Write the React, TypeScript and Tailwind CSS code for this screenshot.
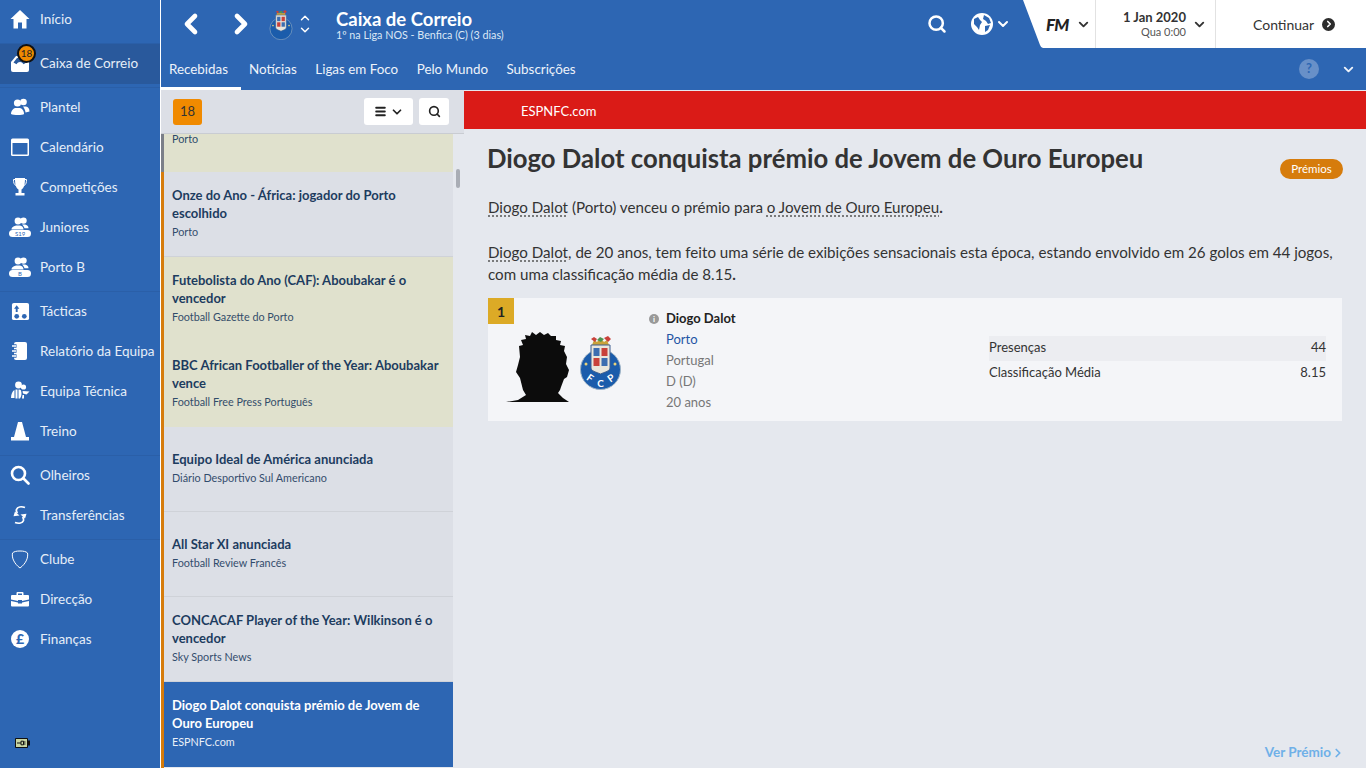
import { ChevronDown, ChevronLeft, ChevronRight, ChevronUp, Search, Menu } from "lucide-react";
import type { ReactNode } from "react";

// Club crest, used small in the header and larger in the award card
function Crest({ className, letters }: { className: string; letters?: boolean }) {
  return (
    <svg viewBox="0 0 41 56" className={className} aria-hidden="true">
      <circle cx="20.500" cy="35.500" r="20" fill="#1b5cab" stroke="#9fb4c6" strokeWidth="1" />
      <path d="M12 11l2-5 3 2 3.500-4 3.500 4 3-2 2 5z" fill="#c9a23a" />
      <path d="M11 5l3-2 3 2-2 3zM24 4l4-2 3 3-3 3z" fill="#c8413a" />
      <path d="M17 6l3-3 4 2-3 3z" fill="#4f9350" />
      <path d="M11 11h19v23c0 3-5 4-9.500 6C16 38 11 37 11 34z" fill="#e9e6dc" stroke="#3e5f8f" strokeWidth="1" />
      <rect x="13.500" y="14" width="6" height="8" fill="#3c6db0" />
      <rect x="21.500" y="14" width="6" height="8" fill="#c8413a" />
      <rect x="13.500" y="24" width="6" height="8" fill="#c8413a" />
      <rect x="21.500" y="24" width="6" height="8" fill="#3c6db0" />
      <circle cx="6" cy="30" r="1.500" fill="#e8d27a" />
      <circle cx="35" cy="30" r="1.500" fill="#e8d27a" />
      {letters && (
        <g fill="white" fontSize="10" fontWeight="700" fontFamily="Lato, sans-serif" textAnchor="middle">
          <text x="8" y="47" transform="rotate(35 8 47)">F</text>
          <text x="20.500" y="53">C</text>
          <text x="33" y="47" transform="rotate(-35 33 47)">P</text>
        </g>
      )}
    </svg>
  );
}

function People({ pill }: { pill?: string }) {
  return (
    <svg viewBox="0 0 22 20" className="h-[20px] w-[22px]" fill="white" aria-hidden="true">
      <circle cx="9" cy="4" r="3.400" />
      <circle cx="14.500" cy="3.600" r="3.200" />
      <path d="M2.500 12.500c0-2.600 3-3.600 4.500-4h4c2 .5 3.500 1.600 3.500 4z" />
      <path d="M13 7.500h3c2 .4 3.500 1.500 3.500 3.800h-4c-.4-1.600-1.300-2.800-2.500-3.800z" />
      <rect x="0" y="13" width="22" height="7" rx="3.500" />
      {pill && (
        <text x="11" y="18.800" textAnchor="middle" fontSize="6" fill="#2d66b3" fontFamily="Lato, sans-serif">
          {pill}
        </text>
      )}
    </svg>
  );
}

const icons: Record<string, ReactNode> = {
  home: (
    <svg viewBox="0 0 20 20" className="h-5 w-5" fill="white">
      <path d="M10 1L0.500 10h3v9.500h4.500v-6h4v6h4.500V10h3z" />
    </svg>
  ),
  inbox: (
    <svg viewBox="0 0 20 20" className="h-5 w-5" fill="white">
      <path d="M1 9l5-6h8l5 6v8a2 2 0 0 1-2 2H3a2 2 0 0 1-2-2z" />
      <path d="M3.500 9.500L7 5h6l3.500 4.500-3 1.800C12.500 9.800 11.500 9 10 9s-2.500.8-3.500 2.300z" fill="#29599c" />
    </svg>
  ),
  squad: (
    <svg viewBox="0 0 20 18" className="h-[18px] w-5" fill="white">
      <circle cx="7.500" cy="5" r="3.600" />
      <circle cx="13.500" cy="4" r="3.300" />
      <path d="M1 16c0-4 3-5.500 4-6h5c1.500.5 4 2 4 6-1 1.300-11 1.300-13 0z" />
      <path d="M13 8.500h3c2 .5 3.500 2 3.500 5l-4 1c-.2-2.500-1.300-4.500-2.500-6z" />
    </svg>
  ),
  calendar: (
    <svg viewBox="0 0 20 20" className="h-5 w-5">
      <rect x="1" y="1.500" width="18" height="17.500" rx="1.500" fill="white" />
      <rect x="2.500" y="6" width="15" height="11.500" fill="#2d66b3" />
    </svg>
  ),
  trophy: (
    <svg viewBox="0 0 20 20" className="h-5 w-5" fill="white">
      <path d="M5 1h10c0 5.500-.5 9.500-3.500 11.500v3.500h3v2.500h-9V16h3v-3.500C5.500 10.500 5 6.500 5 1z" />
      <path d="M5 2.500H3.500c0 3 .4 5 2.500 6M15 2.500h1.500c0 3-.4 5-2.500 6" fill="none" stroke="white" />
    </svg>
  ),
  juniors: <People pill="S19" />,
  b: <People pill="B" />,
  tactics: (
    <svg viewBox="0 0 20 20" className="h-[19px] w-[19px]">
      <rect x="1" y="1" width="18" height="18" rx="2" fill="white" />
      <path d="M6 3.500l2.800 3.500H7v3.500H5V7H3.200z" fill="#2d66b3" />
      <circle cx="6" cy="15" r="2.500" fill="#2d66b3" />
      <circle cx="14" cy="15" r="2.500" fill="#2d66b3" />
    </svg>
  ),
  report: (
    <svg viewBox="0 0 20 20" className="h-5 w-5" fill="white">
      <rect x="4" y="1" width="13" height="18" rx="2" />
      <path d="M1.500 5h5M1.500 10h5M1.500 15h5" stroke="#2d66b3" strokeWidth="3.400" />
      <path d="M2 5h4M2 10h4M2 15h4" stroke="white" strokeWidth="1.500" />
    </svg>
  ),
  staff: (
    <svg viewBox="0 0 20 20" className="h-5 w-5" fill="white">
      <circle cx="8.500" cy="4" r="3.400" />
      <circle cx="13.500" cy="6" r="2.600" />
      <path d="M1 17c0-4 1.500-7 3.500-8v8zM5.500 8.500v9h2v-9zM8.500 8.500v9h1.500c1.500-2 2-5 1-8-.5-.6-1.500-1-2.500-1z" />
      <path d="M12.500 10l7 .5-3 3-3.500-1z" />
      <path d="M12 17.500h2V14h-1.500z" />
    </svg>
  ),
  cone: (
    <svg viewBox="0 0 20 20" className="h-5 w-5" fill="white">
      <path d="M8 1h4l4 15h3v3.500H1V16h3z" />
    </svg>
  ),
  scout: (
    <svg viewBox="0 0 20 20" className="h-5 w-5" fill="none" stroke="white" strokeWidth="2.600">
      <circle cx="8.500" cy="8.500" r="6.500" />
      <path d="M13.500 13.500l5 5" strokeLinecap="round" />
    </svg>
  ),
  transfers: (
    <svg viewBox="0 0 20 20" className="h-5 w-5" fill="none" stroke="white" strokeWidth="1.800">
      <path d="M15 2.500C11 1 7.500 2 6.500 4.500c-.5 1.500 0 2.500 1 3.500" />
      <path d="M5 6.500L9.500 10.500l-6 .8z" fill="white" stroke="none" />
      <path d="M5 17.500c4 1.500 7.500.5 8.500-2 .5-1.500 0-2.500-1-3.500" />
      <path d="M15 13.500L10.500 9.500l6-.8z" fill="white" stroke="none" />
    </svg>
  ),
  shield: (
    <svg viewBox="0 0 20 20" className="h-5 w-5" fill="none" stroke="white" strokeWidth="1">
      <path d="M10 2c3.500 0 6 .5 7.500 2 1 5-2 11-7.500 15C4.500 15 1.500 9 2.500 4 4 2.500 6.500 2 10 2z" />
    </svg>
  ),
  case: (
    <svg viewBox="0 0 20 20" className="h-5 w-5" fill="white">
      <path d="M6.500 6V4a1 1 0 0 1 1-1h5a1 1 0 0 1 1 1v2h-1.500V4.500h-4V6z" />
      <path d="M2 6h16a1 1 0 0 1 1 1v3.500l-7 1.500v-1H8v1l-7-1.500V7a1 1 0 0 1 1-1z" />
      <path d="M1 12l7 1.500v1h4v-1l7-1.500v4.500a1 1 0 0 1-1 1H2a1 1 0 0 1-1-1z" />
    </svg>
  ),
  money: (
    <div className="flex h-[18px] w-[18px] items-center justify-center rounded-full bg-white text-[14px] font-black leading-none text-[#2d66b3]">
      £
    </div>
  ),
};

const navGroups = [
  [{ label: "Início", icon: "home" }],
  [{ label: "Caixa de Correio", icon: "inbox", active: true, badge: "18" }],
  [
    { label: "Plantel", icon: "squad" },
    { label: "Calendário", icon: "calendar" },
    { label: "Competições", icon: "trophy" },
    { label: "Juniores", icon: "juniors" },
    { label: "Porto B", icon: "b" },
  ],
  [
    { label: "Tácticas", icon: "tactics" },
    { label: "Relatório da Equipa", icon: "report" },
    { label: "Equipa Técnica", icon: "staff" },
    { label: "Treino", icon: "cone" },
  ],
  [
    { label: "Olheiros", icon: "scout" },
    { label: "Transferências", icon: "transfers" },
  ],
  [
    { label: "Clube", icon: "shield" },
    { label: "Direcção", icon: "case" },
    { label: "Finanças", icon: "money" },
  ],
];

const messages = [
  { title: "Onze do Ano - África: jogador do Porto escolhido", source: "Porto" },
  { title: "Futebolista do Ano (CAF): Aboubakar é o vencedor", source: "Football Gazette do Porto", unread: true },
  { title: "BBC African Footballer of the Year: Aboubakar vence", source: "Football Free Press Português", unread: true },
  { title: "Equipo Ideal de América anunciada", source: "Diário Desportivo Sul Americano" },
  { title: "All Star XI anunciada", source: "Football Review Francês" },
  { title: "CONCACAF Player of the Year: Wilkinson é o vencedor", source: "Sky Sports News" },
  { title: "Diogo Dalot conquista prémio de Jovem de Ouro Europeu", source: "ESPNFC.com", selected: true },
];

const tabs = ["Recebidas", "Notícias", "Ligas em Foco", "Pelo Mundo", "Subscrições"];

function Sidebar() {
  return (
    <aside className="flex h-full w-[160px] shrink-0 flex-col bg-[#2d66b3] text-[13.500px] text-[#e6eef8]">
      {navGroups.map((group, i) => (
        <div key={i} className={i < navGroups.length - 1 ? "border-b border-[#2a5fa8] pb-[3px]" : ""}>
          {group.map((item) => (
            <div
              key={item.label}
              className={
                item.active
                  ? "relative flex h-[40px] items-center bg-[#29599c] pb-[2px]"
                  : "relative flex h-[40px] items-center pb-[2px]"
              }
            >
              <div className="flex w-[40px] shrink-0 justify-center">{icons[item.icon]}</div>
              <span className="whitespace-nowrap">{item.label}</span>
              {item.badge && (
                <span className="absolute left-[17px] top-0 flex h-[19px] w-[19px] items-center justify-center rounded-full border-2 border-[#111] bg-[#f08a00] text-[10px] text-[#222]">
                  {item.badge}
                </span>
              )}
            </div>
          ))}
        </div>
      ))}
      <div className="mt-auto pb-[20px] pl-[15px]">
        <svg viewBox="0 0 15 10" className="h-[10px] w-[15px]" aria-hidden="true">
          <rect x="0" y="0" width="13" height="10" rx="1" fill="#111" />
          <rect x="13" y="2.500" width="2" height="5" fill="#111" />
          <rect x="1" y="1" width="11" height="8" fill="#c9d6a2" />
          <path d="M2 5h4M6 3.200h2.500v3.600H6zM8.500 4h2M8.500 6h2" stroke="#111" strokeWidth="1" fill="none" />
        </svg>
      </div>
    </aside>
  );
}

function Header() {
  return (
    <header className="h-[90px] shrink-0 bg-[#2d66b3] text-white">
      <div className="flex h-[48px] items-stretch">
        <div className="flex flex-1 items-center">
          <ChevronLeft size={32} strokeWidth={3.500} className="ml-[14px]" />
          <ChevronRight size={32} strokeWidth={3.500} className="ml-[18px]" />
          <Crest className="ml-[12px] h-[31px] w-[24px]" />
          <div className="ml-[5px] flex flex-col">
            <ChevronUp size={14} strokeWidth={2.500} className="-mb-px" />
            <ChevronDown size={14} strokeWidth={2.500} className="-mt-px" />
          </div>
          <div className="ml-[24px] pt-px">
            <div className="text-[18.500px] font-bold leading-[20px]">Caixa de Correio</div>
            <div className="text-[10.750px] leading-[11px] text-[#dce8f6]">1º na Liga NOS - Benfica (C) (3 dias)</div>
          </div>
          <Search size={20} strokeWidth={3} className="ml-auto" />
          <svg viewBox="0 0 22 22" className="ml-[24px] h-[22px] w-[22px]" aria-hidden="true">
            <circle cx="11" cy="11" r="11" fill="white" />
            <path d="M3 6l4-2 2 3 2 2-2 3-1 5-2-3-3-3zM13 2l5 3 2 5-3 1-2-3-3-2zM14 13l5-1-2 5-3 2z" fill="#2d66b3" />
          </svg>
          <ChevronDown size={16} strokeWidth={3} className="ml-[2px] mr-[11px]" />
        </div>
        <div className="flex items-stretch text-[#333]">
          <svg viewBox="0 0 22 48" className="h-[48px] w-[22px]" aria-hidden="true">
            <path d="M1 0H22V48H21Q19 48 18 45Z" fill="white" />
          </svg>
          <div className="flex w-[52px] items-center gap-[6px] border-r border-[#e2e2e2] bg-white pl-[2px]">
            <span className="w-[24px] text-[17px] font-black italic leading-none tracking-tighter text-[#222]">FM</span>
            <ChevronDown size={15} strokeWidth={3} className="text-[#333]" />
          </div>
          <div className="flex w-[120px] items-center border-r border-[#e2e2e2] bg-white pl-[27px]">
            <div className="text-right">
              <div className="text-[13px] font-bold leading-[16px]">1 Jan 2020</div>
              <div className="text-[11px] leading-[14px] text-[#555]">Qua 0:00</div>
            </div>
            <ChevronDown size={15} strokeWidth={3} className="ml-[6px]" />
          </div>
          <div className="flex w-[150px] items-center gap-[8px] bg-white pl-[37px] text-[14px]">
            Continuar
            <span className="flex h-[13px] w-[13px] items-center justify-center rounded-full bg-[#2c2c2c] text-white">
              <ChevronRight size={10} strokeWidth={4} />
            </span>
          </div>
        </div>
      </div>
      <div className="flex h-[42px] items-stretch text-[13.400px] text-[#eef3fa]">
        {tabs.map((t, i) => (
          <div
            key={t}
            className={
              i === 0
                ? "flex w-[80px] items-center border-b-[3px] border-white pl-[8px] pt-[3px]"
                : "flex items-center pl-[8px] pr-[10.500px]"
            }
          >
            {t}
          </div>
        ))}
        <div className="ml-auto flex items-center pr-[10px]">
          <span className="flex h-[20px] w-[20px] items-center justify-center rounded-full bg-[#6890c8] text-[13px] font-bold text-[#2d66b3]">
            ?
          </span>
          <ChevronDown size={15} strokeWidth={3} className="ml-[22px]" />
        </div>
      </div>
    </header>
  );
}

function MessageList() {
  return (
    <section className="flex h-full w-[303px] shrink-0 flex-col bg-[#e5e8ee]">
      <div className="flex h-[44px] shrink-0 items-center border-b border-[#c9ccd2] bg-[#dcdfe6] pl-[12px] pr-[15px]">
        <span className="flex h-[26px] w-[29px] items-center justify-center rounded-[3px] bg-[#f08a00] text-[13px] text-[#333]">
          18
        </span>
        <span className="ml-auto flex h-[27px] w-[49px] items-center justify-center gap-[3px] rounded-[3px] bg-white text-[#222]">
          <Menu size={13} strokeWidth={3.500} />
          <ChevronDown size={14} strokeWidth={3} />
        </span>
        <span className="ml-[6px] flex h-[27px] w-[30px] items-center justify-center rounded-[3px] bg-white text-[#222]">
          <Search size={13} strokeWidth={3} />
        </span>
      </div>
      <div className="flex min-h-0 flex-1">
        <div className="flex w-[3px] shrink-0 flex-col bg-[#d67c0c]">
          <div className="h-[38px] bg-[#7b7f88]" />
        </div>
        <div className="w-[289px] shrink-0 overflow-hidden">
          <div className="h-[38px] bg-[#e0e1cd] pl-[8px] text-[10.800px] leading-[9px] text-[#2b4a6a]">Porto</div>
          {messages.map((m) => (
            <div
              key={m.title}
              className={
                m.selected
                  ? "flex h-[85px] flex-col justify-start bg-[#2d66b3] px-[8px] pt-[14px] text-white"
                  : m.unread
                    ? "flex h-[85px] flex-col justify-start bg-[#e0e1cd] px-[8px] pt-[14px] text-[#1d3c5f]"
                    : "flex h-[85px] flex-col justify-start border-b border-[#cfd2d8] bg-[#dcdfe6] px-[8px] pt-[14px] text-[#1d3c5f]"
              }
            >
              <div
                className={
                  m.title.length < 36
                    ? "mt-[9px] text-[13px] font-bold leading-[18px]"
                    : "text-[13px] font-bold leading-[18px]"
                }
              >
                {m.title}
              </div>
              <div className="mt-[3px] text-[10.800px] leading-[14px] opacity-90">{m.source}</div>
            </div>
          ))}
        </div>
        <div className="w-[11px] shrink-0 pl-[3px] pt-[35px]">
          <div className="h-[19px] w-[4px] rounded-full bg-[#a9adb5]" />
        </div>
      </div>
    </section>
  );
}

function Dotted({ children }: { children: ReactNode }) {
  return <span className="underline decoration-[#555] decoration-dotted underline-offset-[3px]">{children}</span>;
}

function Article() {
  return (
    <main className="flex h-full min-w-0 flex-1 flex-col bg-[#e5e8ee]">
      <div className="mt-px flex h-[38px] shrink-0 items-center bg-[#da1b17] pl-[57px] pt-[3px] text-[13px] text-white">
        ESPNFC.com
      </div>
      <div className="flex flex-1 flex-col pl-[24px] pr-[24px]">
        <div className="flex items-start justify-between pt-[14px]">
          <h1 className="-ml-px text-[25.700px] font-bold leading-[30px] text-[#333]">
            Diogo Dalot conquista prémio de Jovem de Ouro Europeu
          </h1>
          <span className="-mr-px mt-[16px] flex h-[20px] w-[63px] items-center justify-center rounded-full bg-[#d67c0c] text-[11.500px] text-white">
            Prémios
          </span>
        </div>
        <div className="mt-[17px] text-[15.150px] leading-[22px] text-[#333]">
          <p>
            <Dotted>Diogo Dalot</Dotted> (Porto) venceu o prémio para <Dotted>o Jovem de Ouro Europeu</Dotted>
            <b>.</b>
          </p>
          <p className="mt-[23px]">
            <Dotted>Diogo Dalot</Dotted>, de 20 anos, tem feito uma série de exibições sensacionais esta época, estando envolvido em 26 golos em 44 jogos, com uma classificação média de 8.15<b>.</b>
          </p>
        </div>
        <div className="mt-[13px] flex h-[123px] bg-[#f4f5f8]">
          <div className="w-[161px] shrink-0">
            <div className="flex h-[26px] w-[26px] items-center justify-center bg-[#dcaa26] text-[14px] font-bold text-[#222]">
              1
            </div>
            <div className="ml-[18px] mt-[8px] flex items-start gap-[10px]">
              <svg viewBox="0 0 64 70" className="h-[70px] w-[64px] shrink-0" aria-hidden="true">
                <path
                  d="M0 70L12 68 20 63 17 58 14 46 10 40 12 33 14 25 13 14 17 13 15 8 20 7 19 3 24 4 26 0 30 3 34 0 38 3 42 1 45 4 50 4 50 8 55 9 54 13 59 14 58 19 61 25 60 32 63 38 61 45 58 47 55 55 54 58 52 61 57 66 63 70Z"
                  fill="#0c0c0c"
                />
              </svg>
              <Crest letters className="mt-[2px] h-[56px] w-[41px] shrink-0" />
            </div>
          </div>
          <div className="w-[340px] shrink-0 pt-[10px] text-[13px] leading-[21px] text-[#777]">
            <div className="flex items-center">
              <span className="flex h-[10px] w-[10px] items-center justify-center rounded-full bg-[#999] text-[8px] font-bold leading-none text-white">
                i
              </span>
              <span className="ml-[7px] font-bold text-[#222]">Diogo Dalot</span>
            </div>
            <div className="pl-[17px] text-[#1f55a5]">Porto</div>
            <div className="pl-[17px]">Portugal</div>
            <div className="pl-[17px]">D (D)</div>
            <div className="pl-[17px]">20 anos</div>
          </div>
          <div className="w-[337px] shrink-0 pt-[38px] text-[13px] text-[#333]">
            <div className="flex h-[25px] items-center justify-between bg-[#ecedf1] pb-[2px]">
              <span>Presenças</span>
              <span>44</span>
            </div>
            <div className="flex h-[25px] items-center justify-between pb-[2px]">
              <span>Classificação Média</span>
              <span>8.15</span>
            </div>
          </div>
        </div>
        <div className="mt-auto flex h-[31px] items-center justify-end text-[13.500px] font-bold text-[#6fb0e8]">
          Ver Prémio
          <ChevronRight size={14} strokeWidth={3} className="-mr-[3px]" />
        </div>
      </div>
    </main>
  );
}

export default function App() {
  return (
    <div className="flex h-[768px] w-[1366px] overflow-hidden bg-white font-['Lato',sans-serif]">
      <Sidebar />
      <div className="ml-px flex min-w-0 flex-1 flex-col">
        <Header />
        <div className="flex min-h-0 flex-1">
          <MessageList />
          <Article />
        </div>
      </div>
    </div>
  );
}
